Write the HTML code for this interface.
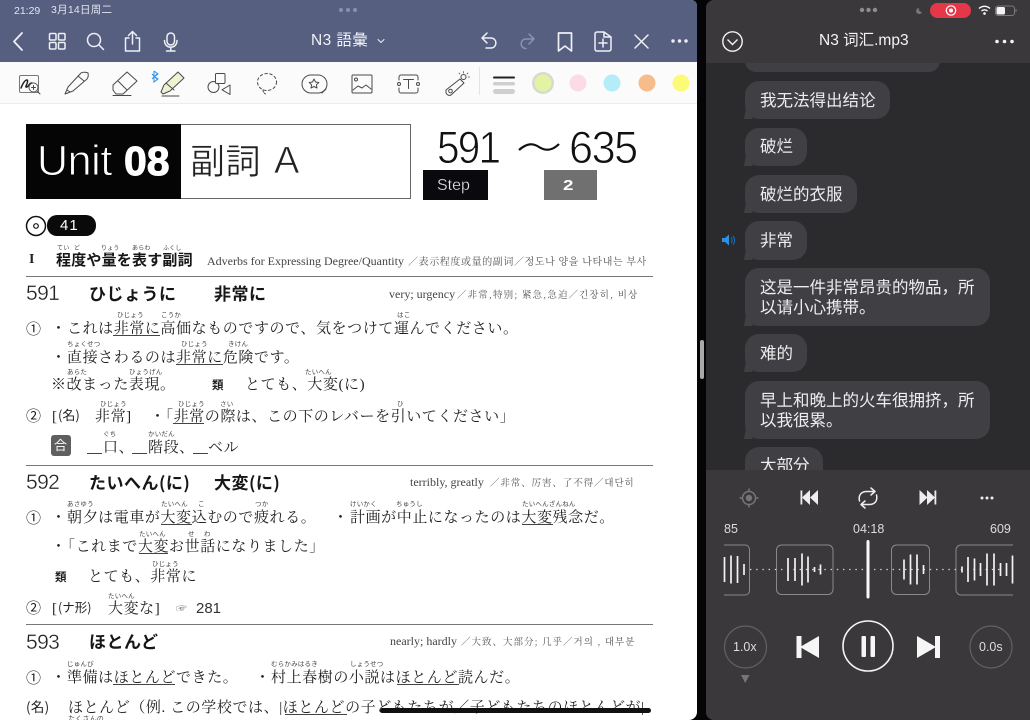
<!DOCTYPE html>
<html lang="ja"><head><meta charset="utf-8"><style>
html,body{margin:0;padding:0;background:#000}
#s{position:relative;width:1030px;height:720px;overflow:hidden;background:#050406;font-family:"Liberation Sans","Noto Sans CJK SC",sans-serif}
#s div,#s span.a{position:absolute;white-space:pre}
.j{font-family:"Liberation Serif","Noto Serif CJK SC","Noto Sans CJK JP",serif;font-size:15px;line-height:20px;letter-spacing:.58px;color:#222;margin-top:2px}
.g{font-family:"Noto Sans CJK JP",sans-serif;font-size:15px;line-height:20px;letter-spacing:.4px;color:#222;margin-top:2px}
.r{font-family:"Noto Sans CJK JP",sans-serif;font-size:6.5px;line-height:8px;color:#444;letter-spacing:.2px;margin-top:-1px}
.h{font-family:"Noto Sans CJK JP",sans-serif;font-weight:700;font-size:17px;line-height:22px;color:#161616;letter-spacing:.5px}
.n{font-family:"Liberation Sans",sans-serif;font-size:21px;line-height:24px;color:#222;-webkit-text-stroke:.35px #fff;letter-spacing:-.6px;margin-top:1px}
.e{font-family:"Liberation Serif","Noto Serif CJK SC",serif;font-size:12px;line-height:14px;color:#444}
.u{height:1px;background:#444}
.l{left:26px;width:627px;height:1px;background:#777}
.b{left:745px;background:#403f43;border-radius:14px}
.c{font-family:"Liberation Sans","Noto Sans CJK SC",sans-serif;font-size:16.5px;line-height:20px;color:#eeeeee;left:760px;margin-top:1px}
.w{color:#eef0f5}
</style></head><body><div id="s">

<!-- left pane -->
<div style="left:0;top:0;width:697px;height:720px;background:#fff;border-radius:0 6px 8px 0;overflow:hidden"></div>
<div style="left:0;top:0;width:697px;height:62px;background:#565f80;border-radius:0 6px 0 0"></div>
<div style="left:0;top:62px;width:697px;height:41px;background:#fbfbfb;border-bottom:1px solid #ececec"></div>

<div class="w" style="left:14px;top:4px;font-size:10.5px;line-height:14px;color:#e4e7ef">21:29</div>
<div class="w" style="left:51px;top:3px;font-size:10.5px;line-height:14px;color:#e4e7ef;letter-spacing:.25px">3月14日周二</div>
<div style="left:311px;top:31px;font-size:15.5px;line-height:20px;color:#f2f3f7;letter-spacing:.4px;font-family:'Liberation Sans','Noto Sans CJK JP',sans-serif">N3 語彙</div>

<!-- page header -->
<div style="left:26px;top:124px;width:385px;height:75px;box-sizing:border-box;border:1.5px solid #666;background:#fff"></div>
<div style="left:26px;top:124px;width:155px;height:75px;background:#050505"></div>
<div style="left:37px;top:136px;font-size:43px;line-height:50px;color:#fff;-webkit-text-stroke:.9px #050505;letter-spacing:-.4px">Unit</div>
<div style="left:124px;top:136px;font-size:41px;line-height:50px;color:#fff;font-weight:700;-webkit-text-stroke:1px #fff">08</div>
<div style="left:190px;top:136px;font-size:35px;line-height:48px;color:#222;font-family:'Noto Sans CJK JP',sans-serif;font-weight:400;letter-spacing:.5px;-webkit-text-stroke:.4px #fff">副詞</div>
<div style="left:274px;top:137px;font-size:38px;line-height:48px;color:#222;-webkit-text-stroke:.7px #fff">A</div>
<div style="left:437px;top:122px;font-size:45px;line-height:52px;color:#111;-webkit-text-stroke:.9px #fff;letter-spacing:-2px;transform:scaleX(.9);transform-origin:left">591</div>
<div style="left:569px;top:122px;font-size:45px;line-height:52px;color:#111;-webkit-text-stroke:.9px #fff;letter-spacing:-1.5px;transform:scaleX(.96);transform-origin:left">635</div>
<div style="left:423px;top:170px;width:65px;height:30px;background:#0a0a0e"></div>
<div style="left:437px;top:176px;font-size:16px;line-height:19px;color:#e8e8e8;-webkit-text-stroke:.3px #0a0a0e">Step</div>
<div style="left:544px;top:170px;width:53px;height:30px;background:#707070"></div>
<div style="left:564px;top:176px;font-size:15px;line-height:19px;color:#fff;font-weight:700;transform:scaleX(1.25)">2</div>
<div style="left:47px;top:215px;width:49px;height:21px;border-radius:10px;background:#0a0a0a"></div>
<div style="left:60px;top:217px;font-size:15px;line-height:17px;color:#fff;letter-spacing:1px">41</div>

<!-- section I -->
<div class="j" style="left:29px;top:248px;font-weight:700;font-size:14px">I</div>
<div class="h" style="left:56px;top:249px;font-size:15px;line-height:21px;letter-spacing:.2px">程度や量を表す副詞</div>
<div class="r" style="left:57px;top:245px;font-size:6px">てい</div><div class="r" style="left:74px;top:245px;font-size:6px">ど</div>
<div class="r" style="left:101px;top:245px;font-size:6px">りょう</div><div class="r" style="left:132px;top:245px;font-size:6px">あらわ</div>
<div class="r" style="left:163px;top:245px;font-size:6px">ふくし</div>
<div class="e" style="left:207px;top:254px">Adverbs for Expressing Degree/Quantity</div>
<div class="e" style="left:408px;top:254px;font-size:10px;color:#555;letter-spacing:.6px;font-family:'Noto Serif CJK SC',serif">／表示程度或量的副词／정도나 양을 나타내는 부사</div>
<div class="l" style="top:276px"></div>

<!-- 591 -->
<div class="n" style="left:26px;top:281px">591</div>
<div class="h" style="left:89px;top:282px">ひじょうに</div>
<div class="h" style="left:214px;top:282px">非常に</div>
<div class="e" style="left:389px;top:287px">very; urgency</div>
<div class="e" style="left:457px;top:287px;font-size:9.5px;color:#555;letter-spacing:1.1px;font-family:'Noto Serif CJK SC',serif">／非常,特别; 紧急,急迫／긴장히, 비상</div>

<div class="g" style="left:26px;top:317px">①</div>
<div class="j" style="left:51px;top:317px">・</div>
<div class="j" style="left:67px;top:317px">これは非常に高価なものですので、気をつけて運んでください。</div>
<div class="u" style="left:113px;top:335px;width:47px"></div>
<div class="r" style="left:117px;top:311px">ひじょう</div><div class="r" style="left:161px;top:311px">こうか</div><div class="r" style="left:397px;top:311px">はこ</div>

<div class="j" style="left:51px;top:346px">・</div>
<div class="j" style="left:67px;top:346px">直接さわるのは非常に危険です。</div>
<div class="u" style="left:176px;top:364px;width:47px"></div>
<div class="r" style="left:67px;top:340px">ちょくせつ</div><div class="r" style="left:181px;top:340px">ひじょう</div><div class="r" style="left:228px;top:340px">きけん</div>

<div class="j" style="left:51px;top:373px">※改まった表現。</div>
<div class="g" style="left:212px;top:373px;font-size:11.5px;font-weight:700">類</div>
<div class="j" style="left:245px;top:373px">とても、大変(に)</div>
<div class="r" style="left:67px;top:368px">あらた</div><div class="r" style="left:129px;top:368px">ひょうげん</div><div class="r" style="left:305px;top:368px">たいへん</div>

<div class="g" style="left:26px;top:404px">②</div>
<div class="j" style="left:52px;top:405px">[</div>
<div class="g" style="left:58px;top:403px;font-size:13px;letter-spacing:0">(名)</div>
<div class="j" style="left:95px;top:405px">非常]</div>
<div class="j" style="left:150px;top:405px">・</div>
<div class="j" style="left:158px;top:405px">「非常の際は、この下のレバーを引いてください」</div>
<div class="u" style="left:173px;top:423px;width:31px"></div>
<div class="r" style="left:100px;top:400px">ひじょう</div><div class="r" style="left:178px;top:400px">ひじょう</div><div class="r" style="left:220px;top:400px">さい</div><div class="r" style="left:397px;top:400px">ひ</div>

<div style="left:51px;top:435px;width:20px;height:21px;border-radius:3px;background:#5f5f5f"></div>
<div class="g" style="left:54px;top:433px;font-size:13px;color:#fff">合</div>
<div class="u" style="left:87px;top:453px;width:15px"></div><div class="j" style="left:103px;top:436px">口、</div>
<div class="u" style="left:132px;top:453px;width:15px"></div><div class="j" style="left:148px;top:436px">階段、</div>
<div class="u" style="left:193px;top:453px;width:15px"></div><div class="j" style="left:208px;top:436px">ベル</div>
<div class="r" style="left:103px;top:430px">ぐち</div><div class="r" style="left:148px;top:430px">かいだん</div>

<div class="l" style="top:465px"></div>

<!-- 592 -->
<div class="n" style="left:26px;top:470px">592</div>
<div class="h" style="left:89px;top:471px">たいへん(に)</div>
<div class="h" style="left:214px;top:471px">大変(に)</div>
<div class="e" style="left:410px;top:475px">terribly, greatly</div>
<div class="e" style="left:490px;top:475px;font-size:9.5px;color:#555;letter-spacing:.9px;font-family:'Noto Serif CJK SC',serif">／非常、厉害、了不得／대단히</div>

<div class="g" style="left:26px;top:506px">①</div>
<div class="j" style="left:51px;top:506px">・</div>
<div class="j" style="left:67px;top:506px">朝夕は電車が大変込むので疲れる。</div>
<div class="j" style="left:333px;top:506px">・</div>
<div class="j" style="left:350px;top:506px">計画が中止になったのは大変残念だ。</div>
<div class="u" style="left:161px;top:524px;width:31px"></div><div class="u" style="left:522px;top:524px;width:31px"></div>
<div class="r" style="left:67px;top:500px">あさゆう</div><div class="r" style="left:161px;top:500px">たいへん</div><div class="r" style="left:198px;top:500px">こ</div><div class="r" style="left:255px;top:500px">つか</div><div class="r" style="left:350px;top:500px">けいかく</div><div class="r" style="left:396px;top:500px">ちゅうし</div><div class="r" style="left:522px;top:500px">たいへんざんねん</div>

<div class="j" style="left:51px;top:535px">・</div>
<div class="j" style="left:60px;top:535px">「これまで大変お世話になりました」</div>
<div class="u" style="left:139px;top:553px;width:29px"></div>
<div class="r" style="left:139px;top:530px">たいへん</div><div class="r" style="left:188px;top:530px">せ</div><div class="r" style="left:204px;top:530px">わ</div>

<div class="g" style="left:55px;top:565px;font-size:11.5px;font-weight:700">類</div>
<div class="j" style="left:88px;top:565px">とても、非常に</div>
<div class="r" style="left:152px;top:560px">ひじょう</div>

<div class="g" style="left:26px;top:596px">②</div>
<div class="j" style="left:52px;top:597px">[</div>
<div class="g" style="left:58px;top:595px;font-size:12.5px;letter-spacing:0">(ナ形)</div>
<div class="j" style="left:108px;top:597px">大変な]</div>
<div class="r" style="left:108px;top:592px">たいへん</div>
<div class="g" style="left:176px;top:596px;font-size:11px;color:#777">☞</div>
<div class="a" style="position:absolute;left:196px;top:599px;font-size:15px;line-height:20px;color:#333">281</div>

<div class="l" style="top:624px"></div>

<!-- 593 -->
<div class="n" style="left:26px;top:630px">593</div>
<div class="h" style="left:89px;top:630px">ほとんど</div>
<div class="e" style="left:390px;top:634px">nearly; hardly</div>
<div class="e" style="left:461px;top:634px;font-size:9.5px;color:#555;letter-spacing:1px;font-family:'Noto Serif CJK SC',serif">／大致、大部分; 几乎／거의 , 대부분</div>

<div class="g" style="left:26px;top:666px">①</div>
<div class="j" style="left:51px;top:666px">・</div>
<div class="j" style="left:67px;top:666px">準備はほとんどできた。</div>
<div class="j" style="left:255px;top:666px">・</div>
<div class="j" style="left:271px;top:666px">村上春樹の小説はほとんど読んだ。</div>
<div class="u" style="left:113px;top:684px;width:62px"></div><div class="u" style="left:397px;top:684px;width:62px"></div>
<div class="r" style="left:67px;top:660px">じゅんび</div><div class="r" style="left:271px;top:660px">むらかみはるき</div><div class="r" style="left:350px;top:660px">しょうせつ</div>

<div class="g" style="left:26px;top:694px;font-size:13.5px;letter-spacing:.3px">(名)</div>
<div class="j" style="left:68px;top:696px">ほとんど（例. この学校では、|ほとんどの子どもたちが／子どもたちのほとんどが|</div>
<div class="u" style="left:285px;top:714px;width:62px"></div>
<div class="r" style="left:68px;top:716px;font-size:7px">たくさんの</div>
<div style="left:380px;top:708px;width:271px;height:4.5px;border-radius:3px;background:#111"></div>

<!-- divider handle -->
<div style="left:700px;top:340px;width:4px;height:39px;border-radius:2px;background:#a9a9ab"></div>

<!-- right pane -->
<div style="left:706px;top:0;width:324px;height:720px;background:#2b2a2d;border-radius:8px 0 0 8px;overflow:hidden"></div>

<div class="b" style="top:50px;width:195px;height:22px;z-index:0"></div>
<div style="left:706px;top:0;width:324px;height:63px;background:#3a383b;border-radius:8px 0 0 0"></div>
<div style="left:819px;top:31px;font-size:15.5px;line-height:20px;color:#f4f4f4;font-family:'Liberation Sans','Noto Sans CJK SC',sans-serif">N3 词汇.mp3</div>

<div class="b" style="top:81px;width:145px;height:38px"></div><div class="c" style="top:90px">我无法得出结论</div>
<div class="b" style="top:128px;width:62px;height:38px"></div><div class="c" style="top:136px">破烂</div>
<div class="b" style="top:175px;width:112px;height:38px"></div><div class="c" style="top:184px">破烂的衣服</div>
<div class="b" style="top:221px;width:62px;height:39px"></div><div class="c" style="top:230px">非常</div>
<div class="b" style="top:268px;width:245px;height:58px"></div><div class="c" style="top:277px">这是一件非常昂贵的物品，所</div><div class="c" style="top:297px">以请小心携带。</div>
<div class="b" style="top:334px;width:62px;height:38px"></div><div class="c" style="top:343px">难的</div>
<div class="b" style="top:381px;width:245px;height:58px"></div><div class="c" style="top:390px">早上和晚上的火车很拥挤，所</div><div class="c" style="top:410px">以我很累。</div>
<div class="b" style="top:447px;width:78px;height:40px"></div><div class="c" style="top:455px">大部分</div>

<div style="left:706px;top:470px;width:324px;height:250px;background:#3a383b;border-radius:0 0 0 8px"></div>

<div style="left:724px;top:522px;font-size:12.5px;line-height:15px;color:#ddd">85</div>
<div style="left:853px;top:522px;font-size:12.5px;line-height:15px;color:#ddd">04:18</div>
<div style="left:990px;top:522px;font-size:12.5px;line-height:15px;color:#ddd">609</div>
<div style="left:733px;top:640px;font-size:12.5px;line-height:15px;color:#ddd">1.0x</div>
<div style="left:979px;top:640px;font-size:12.5px;line-height:15px;color:#ddd">0.0s</div>

<!-- icons -->
<svg width="1030" height="720" viewBox="0 0 1030 720" style="position:absolute;left:0;top:0" fill="none">
<!-- status dots -->
<g fill="#8891ab"><circle cx="341" cy="10" r="2"/><circle cx="348" cy="10" r="2"/><circle cx="355" cy="10" r="2"/></g>
<!-- header icons -->
<g stroke="#eef0f5" stroke-width="1.5" stroke-linecap="round" stroke-linejoin="round">
<path d="M22 33l-8 8.500 8 8.500" stroke-width="1.800"/>
<rect x="49.500" y="33.500" width="6.500" height="6.500" rx="1"/><rect x="58.500" y="33.500" width="6.500" height="6.500" rx="1"/><rect x="49.500" y="42.500" width="6.500" height="6.500" rx="1"/><rect x="58.500" y="42.500" width="6.500" height="6.500" rx="1"/>
<circle cx="94" cy="40" r="6.500"/><path d="M99 45l4.500 4.500"/>
<path d="M129 38h-3.500v13h14v-13h-3.500M132.500 44v-12M128.500 35.500l4-4 4 4"/>
<rect x="167" y="33" width="7.500" height="12" rx="3.700"/><path d="M164.500 40.500c0 9 12.500 9 12.500 0M170.800 48v3M166.500 51h8.500"/>
<path d="M378 39.500l3 3 3-3" stroke-width="1"/>
<path d="M487 33l-5 5 5 5M482 38h9c6.500 0 6.500 10 0 10h-5"/>
<g stroke="#8b93ad"><path d="M529 34l5 5-5 5M534 39h-8c-6.500 0-6.500 9.500 0 9.500h-.5"/></g>
<path d="M558.500 33h13v18l-6.500-5-6.500 5z" stroke-width="1.700"/>
<path d="M604 32h-7a2 2 0 0 0-2 2v15a2 2 0 0 0 2 2h12a2 2 0 0 0 2-2v-12zM604 32v5h7M603 39v8M599 43h8"/>
<path d="M635 35l13 13M648 35l-13 13"/>
</g>
<g fill="#eef0f5"><circle cx="673" cy="41" r="1.700"/><circle cx="679.500" cy="41" r="1.700"/><circle cx="686" cy="41" r="1.700"/></g>

<!-- toolbar icons -->
<g stroke="#4a4a4a" stroke-width="1" stroke-linecap="round" stroke-linejoin="round">
<rect x="19.500" y="75.500" width="19" height="17" rx="1.500" stroke="#777"/>
<path d="M21 88c2-5 4-8 6-8 1.500 0 0 4-1 6s2 1 3-1 2-2 3-2" stroke="#222" stroke-width="1.500"/>
<circle cx="33.500" cy="87.500" r="4.500" fill="#fbfbfb" stroke="#555"/><path d="M33.500 85.500v4M31.500 87.500h4M37 91l3 3"/>
<path d="M65 94l3-7 13-14c2-1.500 6-.5 7 0 .5 2 .5 4-1 6l-14 12z" fill="#fbfbfb"/><path d="M78 76l6 5M67 90l3 2" />
<path d="M113 85l14-13 10 9-14 13h-7l-3-4z" fill="#fbfbfb"/><path d="M118 81l9 9M113 95.500h18" />
<path d="M161 92l3-7 14-13 6 6-14 13-7 3z" fill="#eef2d2"/><path d="M166 83l8 7M162 96h17"/>
<circle cx="213.500" cy="87" r="5.500" fill="#fbfbfb"/><rect x="215.500" y="73.500" width="9.500" height="10" rx="1" fill="#fbfbfb"/><path d="M230 85v9.500l-8-4.700z" fill="#fbfbfb"/>
<ellipse cx="267" cy="82" rx="9.500" ry="8.500" stroke-dasharray="2.500 2.500"/><path d="M263 90c0 2 1 3 2.500 4" stroke-dasharray="2 1.500"/>
<rect x="302" y="75" width="25" height="18" rx="9"/><path d="M314 79l1.500 3 3.300.5-2.400 2.300.6 3.200-3-1.500-3 1.500.6-3.200-2.400-2.300 3.300-.5zM322 93l4-4"/>
<rect x="352" y="75" width="20" height="18" rx="1"/><circle cx="356" cy="79.500" r="1.500"/><path d="M353 90l5-4 4 2 4-3 5 4"/>
<path d="M401 75h15a2 2 0 0 1 2 2v3M418 88v3a2 2 0 0 1-2 2h-15a2 2 0 0 1-2-2v-3M399 80v-3a2 2 0 0 1 2-2"/><path d="M403.500 79.500h10M408.500 79.500v9"/><circle cx="399" cy="84" r="1.500"/><circle cx="418" cy="84" r="1.500"/>
<path d="M446 90l14-11 4 4-13 12c-2 1-4 0-5-2z"/><circle cx="450.500" cy="91" r="1.800"/><circle cx="463.500" cy="77" r="2.500"/><path d="M463.500 71.500v1.500M468 73l-1 1M469.500 77h-1.500M459 73l1 1" stroke-width=".8"/>
</g>
<path d="M154 71l4 3-3.500 2.500 3.500 2.500-4 3v-11M152 74l5 5M152 79l5-5" stroke="#2d8fe6" stroke-width="1"/>
<path d="M479.500 67v28" stroke="#e4e4e4"/>
<rect x="493" y="76.500" width="22" height="2" rx="1" fill="#222"/>
<rect x="493" y="82" width="22" height="3.500" rx="1.700" fill="#cfcfcf"/>
<rect x="493" y="89" width="22" height="5" rx="2.500" fill="#cfcfcf"/>
<circle cx="543" cy="83" r="11" fill="#d9d9d2"/><circle cx="543" cy="83" r="8.500" fill="#e2f3a3"/>
<circle cx="578" cy="83" r="8.500" fill="#fbdbe7"/><circle cx="612" cy="83" r="8.500" fill="#b3eef8"/><circle cx="647" cy="83" r="8.500" fill="#f6bd8b"/><circle cx="681" cy="83" r="8.500" fill="#fbfb78"/>

<!-- page misc -->
<circle cx="36" cy="226" r="9.500" stroke="#111" stroke-width="1.500"/><circle cx="36" cy="226" r="2.300" stroke="#111" stroke-width="1.200"/>
<path d="M519 150c8-7 14-7 20-3s13 4 20-3" stroke="#111" stroke-width="2.200"/>

<!-- right status -->
<g fill="#8e8c90"><circle cx="862" cy="10" r="2.200"/><circle cx="868.500" cy="10" r="2.200"/><circle cx="875" cy="10" r="2.200"/></g>
<path d="M919 8a3 3 0 1 0 3 4 3 3 0 0 1-3-4z" fill="#777"/>
<rect x="930" y="3" width="41" height="15" rx="7.500" fill="#e53748"/>
<circle cx="951" cy="10.500" r="4.700" stroke="#fff" stroke-width="1.200"/><circle cx="951" cy="10.500" r="2" fill="#fff"/>
<path d="M979 8.500a8 8 0 0 1 11 0M981.500 11a4.500 4.500 0 0 1 6 0" stroke="#fff" stroke-width="1.400"/><circle cx="984.500" cy="13.500" r="1.300" fill="#fff"/>
<rect x="995.500" y="6" width="19" height="9.500" rx="2.500" stroke="#7a7a7a"/><rect x="996.500" y="7" width="8.500" height="7.500" rx="1.500" fill="#f4f4f4"/>
<path d="M1016 9v3" stroke="#7a7a7a"/>
<circle cx="732.500" cy="41.500" r="9.700" stroke="#f4f4f4" stroke-width="1.400"/><path d="M727.500 39.500l5 5 5-5" stroke="#f4f4f4" stroke-width="1.400"/>
<g fill="#f4f4f4"><circle cx="997" cy="41.500" r="1.800"/><circle cx="1004.500" cy="41.500" r="1.800"/><circle cx="1012" cy="41.500" r="1.800"/></g>
<!-- speaker -->
<path d="M722 238h3l4-3.500v11l-4-3.500h-3z" fill="#2d8fe6"/><path d="M731 237.500c1.500 1.500 1.500 4 0 5.500M733 236c2.200 2.500 2.200 6 0 8.500" stroke="#1f6fb8"/>

<!-- player top row -->
<circle cx="749" cy="498" r="6.500" stroke="#77757a" stroke-width="1.500"/><circle cx="749" cy="498" r="3.200" fill="#77757a"/><path d="M749 488.500v3M749 504.500v3M739.500 498h3M755.500 498h3" stroke="#77757a" stroke-width="1.500"/>
<g fill="#eeeeee"><rect x="800.500" y="490.500" width="1.800" height="14"/><path d="M810 490v15l-8-7.500zM818 490v15l-8-7.500z"/>
<rect x="934.500" y="490.500" width="1.800" height="14"/><path d="M919.500 490v15l8-7.500zM927 490v15l8-7.500z"/></g>
<path d="M859.500 501c-1.500-7 3-9.500 7-9.500h8M871 488l4 3.500-4 3.500M876.500 495c1.500 7-3 9.500-7 9.500h-8M865 508l-4-3.500 4-3.500" stroke="#eeeeee" stroke-width="1.500" stroke-linecap="round" stroke-linejoin="round"/>
<g fill="#eeeeee"><circle cx="982" cy="498" r="1.500"/><circle cx="987" cy="498" r="1.500"/><circle cx="992" cy="498" r="1.500"/></g>

<!-- waveform boxes -->
<g stroke="#8a888c" stroke-width="1">
<path d="M724 545h21a4.500 4.500 0 0 1 4.500 4.500v41a4.500 4.500 0 0 1-4.500 4.500h-21"/>
<rect x="776.500" y="545" width="56.500" height="49.500" rx="5"/>
<rect x="891.500" y="545" width="38" height="49.500" rx="5"/>
<path d="M1013 545h-52a5 5 0 0 0-5 5v40a5 5 0 0 0 5 5h52"/>
</g>
<path d="M750 569.500H1003" stroke="#d8d8d8" stroke-width="1.200" stroke-dasharray="1.400 4.800"/>
<g stroke="#f2f2f2" stroke-width="1.700">
<path d="M724.500 557v25M731 555.500v28M737.500 556v27M744 564v11"/>
<path d="M788 558v23M795 558v23M802 553.500v32M808 556.500v26M814.500 567v5M820.500 564.500v10"/>
<path d="M904 559.500v20M910.500 554.500v30M917 554.500v30M923.500 565v9"/>
<path d="M962 566.500v6M968 557v25M974.500 558.500v22M980.500 563v13M987 553.500v32M994 553.500v32M1000.500 563v13M1006.500 563v13M1012.500 555.500v28"/>
</g>
<rect x="866.500" y="540" width="3" height="58.500" rx="1.500" fill="#f8f8f8"/>

<!-- transport -->
<circle cx="745.500" cy="647" r="21" stroke="#636165" stroke-width="1.200"/>
<circle cx="991" cy="647" r="21" stroke="#636165" stroke-width="1.200"/>
<path d="M741 675h8.500l-4.300 8z" fill="#77757a"/>
<g fill="#f6f6f6"><rect x="796.500" y="636" width="5" height="22"/><path d="M819 636v22l-19-11z"/>
<rect x="935" y="636" width="5" height="22"/><path d="M917 636v22l19-11z"/>
<rect x="861.500" y="636" width="4.500" height="21" rx="1"/><rect x="870.500" y="636" width="4.500" height="21" rx="1"/></g>
<circle cx="868" cy="646" r="25" stroke="#f6f6f6" stroke-width="1.600"/>
</svg>
<svg width="1030" height="720" viewBox="0 0 1030 720" style="position:absolute;left:0;top:0;pointer-events:none"><g fill="#403f43"><path d="M746 108l-2 11h9zM746 155l-2 11h9zM746 202l-2 11h9zM746 249l-2 11h9zM746 315l-2 11h9zM746 361l-2 11h9zM746 428l-2 11h9z"/></g></svg>
</div></body></html>
